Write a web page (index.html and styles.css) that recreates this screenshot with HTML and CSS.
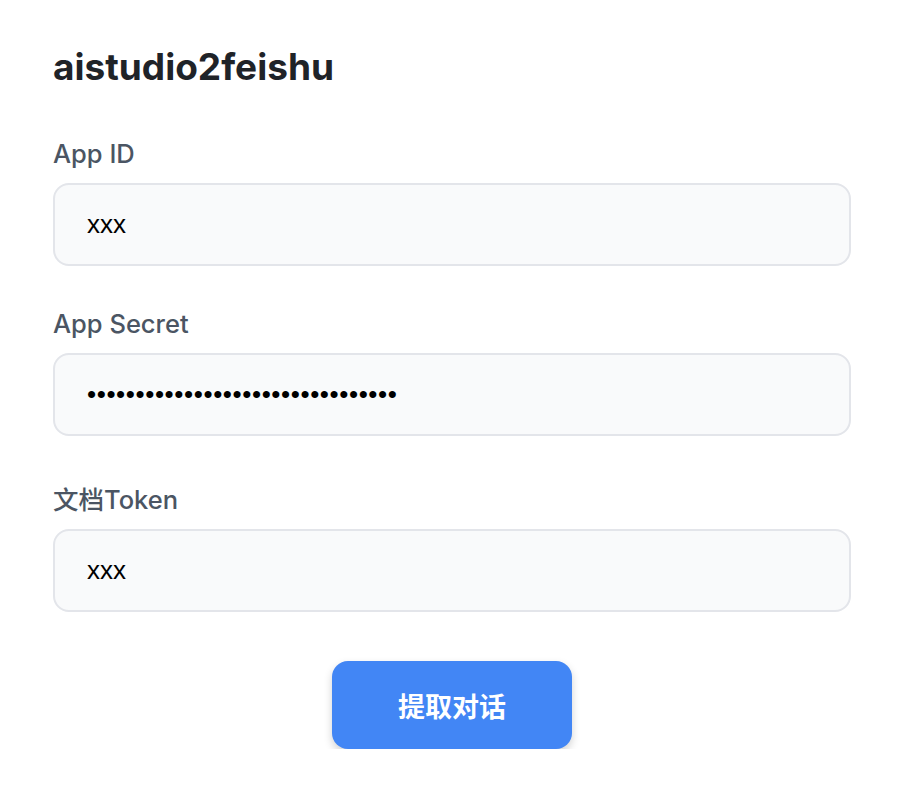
FILE: index.html
```html
<!DOCTYPE html>
<html lang="zh">
<head>
<meta charset="utf-8">
<title>aistudio2feishu</title>
<link rel="stylesheet" href="styles.css">
</head>
<body>
<main class="page">
  <h1 class="title">aistudio2feishu</h1>
  <div class="field">
    <label class="label" for="appid">App ID</label>
    <input class="input" id="appid" type="text" value="xxx">
  </div>
  <div class="field">
    <label class="label" for="secret">App Secret</label>
    <input class="input input-secret" id="secret" type="password" value="xxxxxxxxxxxxxxxxxxxxxxxxxxxxxxxx">
  </div>
  <div class="field field-cjk">
    <label class="label" for="token">文档Token</label>
    <input class="input" id="token" type="text" value="xxx">
  </div>
  <div class="actions">
    <button class="btn" type="button">提取对话</button>
  </div>
</main>
</body>
</html>
```
FILE: styles.css
```css
html, body {
  margin: 0;
  padding: 0;
  background: #ffffff;
}
body {
  font-family: Inter, "Liberation Sans", "Noto Sans CJK SC", sans-serif;
  color: #1f2328;
}
.page {
  padding: 45px 53px 0;
}
.title {
  margin: 0 0 47px;
  font-size: 37px;
  line-height: 44px;
  font-weight: 700;
  color: #1f2328;
}
.field {
  display: flex;
  flex-direction: column;
  margin-bottom: 40px;
}
.field-cjk {
  padding-top: 6px;
}
.label {
  font-size: 25.5px;
  line-height: 36px;
  font-weight: 500;
  color: #4b5563;
  margin-bottom: 11px;
}
.input {
  box-sizing: border-box;
  height: 83px;
  width: 100%;
  padding: 0 32px;
  border: 2px solid #e3e5ea;
  border-radius: 16px;
  background: #f9fafb;
  font-family: "Liberation Sans", Arial, sans-serif;
  font-size: 26px;
  color: #000000;
  outline: none;
}
.input-secret {
  letter-spacing: 0.6px;
}
.actions {
  display: flex;
  justify-content: center;
  padding-top: 9px;
}
.btn {
  width: 240px;
  height: 88px;
  border: none;
  border-radius: 16px;
  background: #4286f5;
  color: #ffffff;
  font-family: "Noto Sans CJK SC", sans-serif;
  font-size: 27px;
  font-weight: 700;
  box-shadow: 0 4px 8px rgba(0, 0, 0, 0.18);
}
```
